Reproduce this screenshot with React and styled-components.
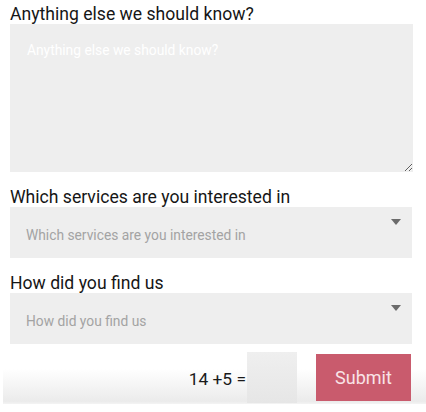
import React, { useState } from 'react'
import styled, { createGlobalStyle } from 'styled-components'

const GlobalStyle = createGlobalStyle`
  body {
    margin: 0;
    background: #fff;
    font-family: Roboto, "Liberation Sans", sans-serif;
  }
`

const Form = styled.form({
    width: "426px",
    display: "flex",
    flexDirection: "column",
    paddingTop: "4px",
})

const Group = styled.div(props => ({
    display: "flex",
    flexDirection: "column",
    padding: "0 13px 0 10px",
    marginBottom: props.last ? "6px" : "15px",
}))

const Label = styled.label({
    fontSize: "17.6px",
    lineHeight: "20px",
    color: "#161616",
})

const TextArea = styled.textarea({
    height: "148px",
    boxSizing: "border-box",
    border: "none",
    outline: "none",
    background: "#eeeeee",
    padding: "18px 17px",
    fontFamily: "inherit",
    fontSize: "13.8px",
    color: "#333",
    resize: "vertical",
    "&::placeholder": {
        color: "#ffffff",
    },
})

const SelectWrap = styled.div({
    position: "relative",
    marginRight: "1px",
})

const Select = styled.select({
    width: "100%",
    height: "51px",
    border: "none",
    outline: "none",
    appearance: "none",
    background: "#eeeeee",
    padding: "5px 16px 0",
    fontFamily: "inherit",
    fontSize: "13.8px",
    color: "#a3a3a3",
})

const Arrow = styled.span({
    position: "absolute",
    right: "11px",
    top: "12px",
    width: 0,
    height: 0,
    borderLeft: "5px solid transparent",
    borderRight: "5px solid transparent",
    borderTop: "6px solid #6b6b6b",
    pointerEvents: "none",
})

const Footer = styled.div({
    display: "flex",
    justifyContent: "flex-end",
    alignItems: "center",
    marginLeft: "3px",
    height: "54px",
    paddingRight: "15px",
    background: "linear-gradient(#ffffff 35%, #ebebeb 95%, #f4f4f4)",
})

const Captcha = styled.span({
    fontSize: "17.4px",
    color: "#1a1a1a",
    marginRight: "1px",
    paddingTop: "4px",
})

const CaptchaInput = styled.input({
    width: "50px",
    height: "51px",
    boxSizing: "border-box",
    border: "none",
    outline: "none",
    background: "linear-gradient(#efefef, #e6e6e6)",
    marginRight: "19px",
    fontFamily: "inherit",
    fontSize: "16px",
})

const Submit = styled.button({
    width: "95px",
    height: "47px",
    border: "none",
    background: "#c95b6d",
    color: "#f9e3e7",
    fontFamily: "inherit",
    fontSize: "18px",
    cursor: "pointer",
    paddingTop: "2px",
})

const DropDown = ({ label, value, setValue, options, last }) => (
    <Group last={last}>
        <Label>{label}</Label>
        <SelectWrap>
            <Select value={value} onChange={(e) => { setValue(e.target.value) }}>
                <option value="" disabled>{label}</option>
                {options.map(o => <option key={o} value={o}>{o}</option>)}
            </Select>
            <Arrow />
        </SelectWrap>
    </Group>
)

export default function App() {
    const [notes, setNotes] = useState("")
    const [service, setService] = useState("")
    const [source, setSource] = useState("")
    const [answer, setAnswer] = useState("")

    return (
        <>
            <GlobalStyle />
            <Form onSubmit={(e) => { e.preventDefault() }}>
                <Group>
                    <Label htmlFor="notes">Anything else we should know?</Label>
                    <TextArea
                        id="notes"
                        placeholder="Anything else we should know?"
                        value={notes}
                        onChange={(e) => { setNotes(e.target.value) }}
                    />
                </Group>
                <DropDown
                    label="Which services are you interested in"
                    value={service}
                    setValue={setService}
                    options={["Design", "Development", "Marketing"]}
                />
                <DropDown
                    last
                    label="How did you find us"
                    value={source}
                    setValue={setSource}
                    options={["Search engine", "Social media", "Friend"]}
                />
                <Footer>
                    <Captcha>14 +5 =</Captcha>
                    <CaptchaInput value={answer} onChange={(e) => { setAnswer(e.target.value) }} />
                    <Submit type="submit">Submit</Submit>
                </Footer>
            </Form>
        </>
    )
}
